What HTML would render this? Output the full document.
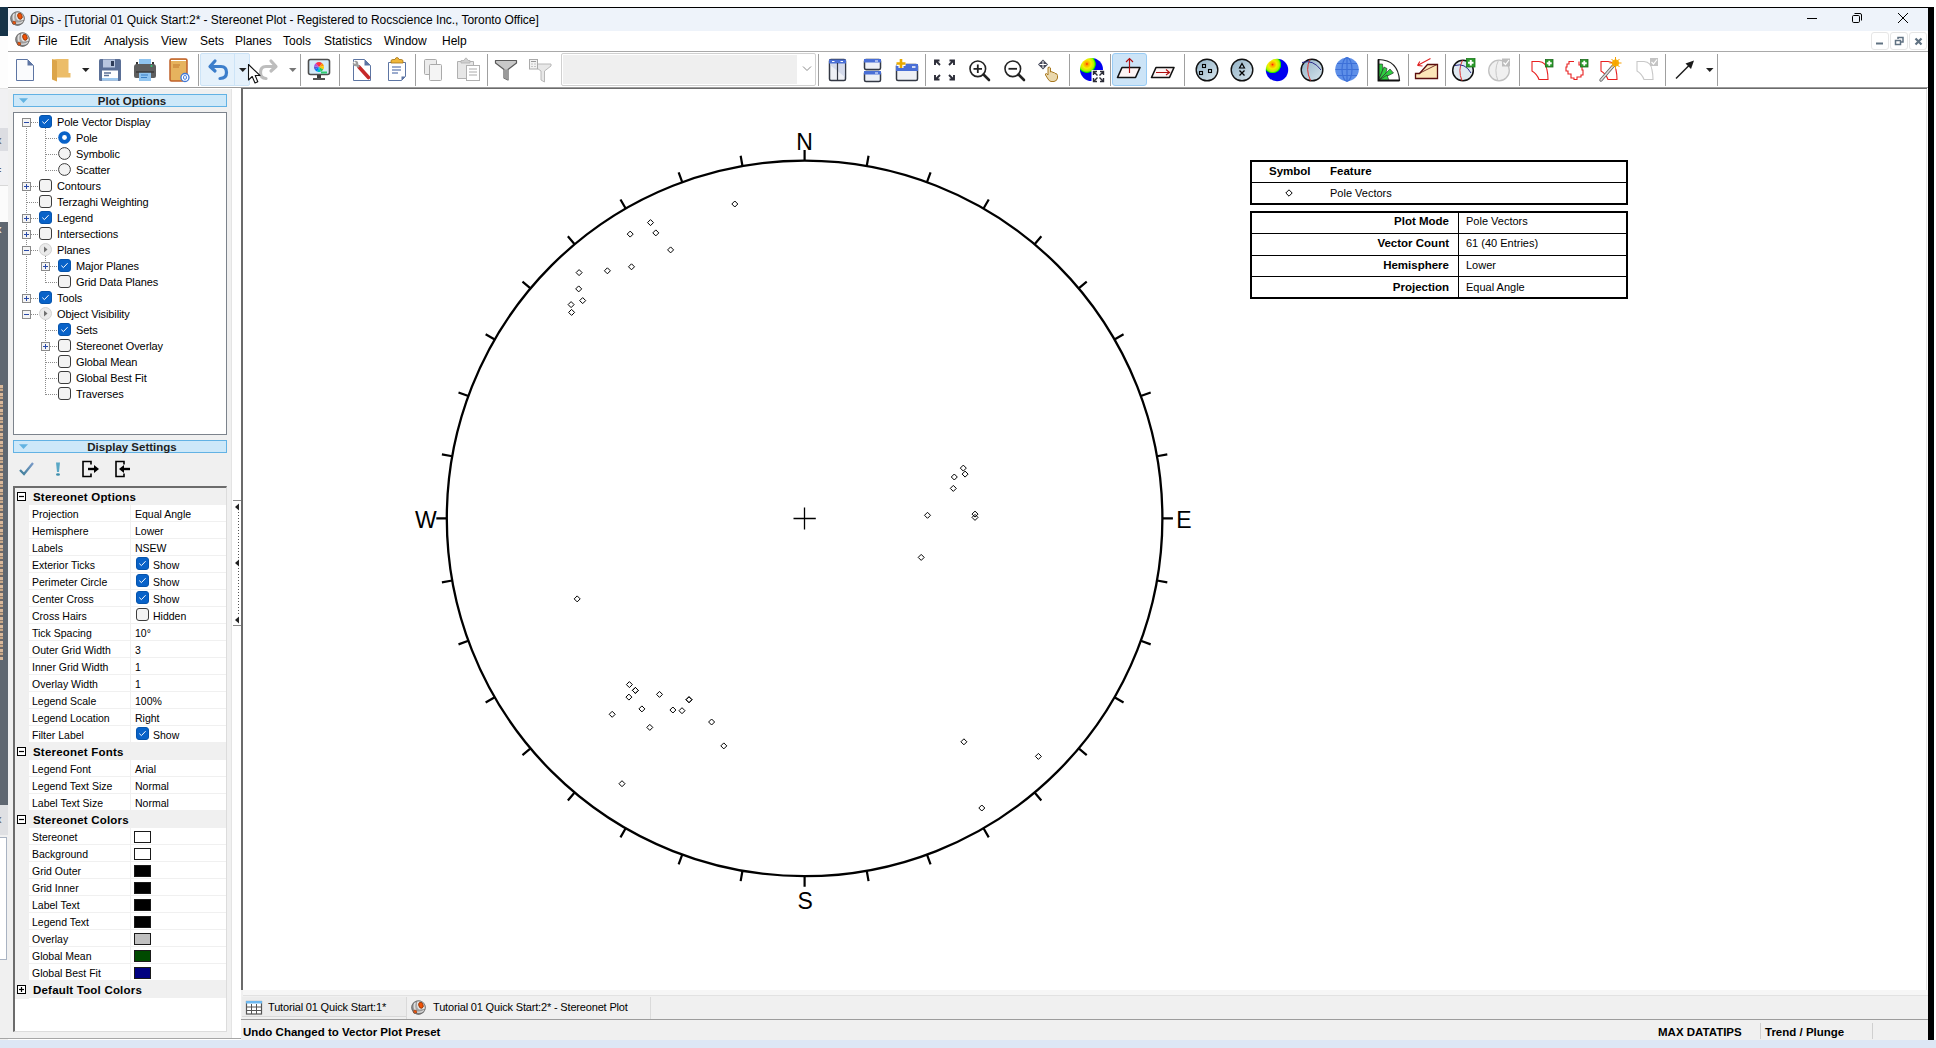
<!DOCTYPE html><html><head><meta charset="utf-8"><style>
*{margin:0;padding:0;box-sizing:border-box}
html,body{width:1936px;height:1048px;overflow:hidden;background:#fff;font-family:"Liberation Sans",sans-serif;position:relative}
.a{position:absolute}
.t{position:absolute;white-space:nowrap;font-size:12px;color:#000;line-height:14px}
.mn{top:34px;font-size:12px}
.lbl{font-size:23px;line-height:23px}
.sep{position:absolute;width:1px;top:54px;height:32px;background:#a0a0a0}
.ic{position:absolute;overflow:visible}
.tr{font-size:11px;letter-spacing:-0.1px}
.pg{font-size:10.5px}
.lg{font-size:11.5px}
</style></head><body>
<svg width="0" height="0" style="position:absolute"><defs>
<radialGradient id="lgG" cx="50%" cy="45%" r="60%"><stop offset="0" stop-color="#b8b8b8"/><stop offset=".7" stop-color="#8e8e8e"/><stop offset="1" stop-color="#5a5a5a"/></radialGradient>
<radialGradient id="ctG" cx="30%" cy="26%" r="62%"><stop offset="0" stop-color="#ff2000"/><stop offset=".1" stop-color="#ffa000"/><stop offset=".3" stop-color="#f4f000"/><stop offset=".5" stop-color="#b0f000"/><stop offset=".6" stop-color="#00e000"/><stop offset=".64" stop-color="#0000f0"/><stop offset="1" stop-color="#0000f0"/></radialGradient>
<linearGradient id="bgG" x1="0" y1="0" x2="1" y2="1"><stop offset="0" stop-color="#8fb0c4"/><stop offset="1" stop-color="#d8e6ee"/></linearGradient>
<symbol id="logo" viewBox="0 0 16 16">
<circle cx="8" cy="8" r="7.6" fill="url(#lgG)"/>
<path d="M6.6 1.2Q5.6 8.5 9 10.2L15 9.6Q15.4 3.5 11.5 1.2Z" fill="#e4e4e4"/>
<path d="M4.4 2.6Q2.6 7.5 5 11.3" stroke="#dedede" stroke-width="1.8" fill="none"/>
<path d="M5.2 12.6Q10 14 14.6 11" stroke="#d4d4d4" stroke-width="1.7" fill="none"/>
<ellipse cx="10.6" cy="5.6" rx="2.3" ry="3.3" transform="rotate(-18 10.6 5.6)" fill="#f25206" stroke="#8f3304" stroke-width=".9"/>
<circle cx="4.3" cy="12.6" r="1.8" fill="#f25206" stroke="#8f3304" stroke-width=".7"/>
<circle cx="8" cy="8" r="7.2" fill="none" stroke="#6e6e6e" stroke-width=".9"/>
</symbol>
</defs></svg>
<div class="a" style="left:0;top:7px;width:8px;height:29px;background:#163348"></div>
<div class="a" style="left:0;top:36px;width:8px;height:52px;background:#fdfdfd"></div>
<div class="a" style="left:0;top:88px;width:8px;height:40px;background:#f1f1f3;border-top:1px solid #e6e6e6"></div>
<div class="a" style="left:0;top:128px;width:8px;height:23px;background:#dcdde2"></div>
<div class="a" style="left:0;top:151px;width:8px;height:34px;background:#f1f1f3"></div>
<div class="a" style="left:0;top:185px;width:8px;height:37px;background:#fbfbfb;border-top:1px solid #d8d8d8"></div>
<div class="a" style="left:0;top:222px;width:8px;height:583px;background:#5f6771"></div>
<div class="a" style="left:0;top:385px;width:3px;height:275px;background:repeating-linear-gradient(180deg,#d9b89a 0 3px,#8a7a70 3px 4px,#c9a888 4px 6px,#6f6a6a 6px 8px)"></div>
<div class="t" style="left:-4px;top:222px;font-size:11px;color:#fff">x</div>
<div class="a" style="left:0;top:805px;width:8px;height:30px;background:#dfe0e3"></div>
<div class="t" style="left:-4px;top:812px;font-size:11px;color:#555">x</div>
<div class="t" style="left:-4px;top:133px;font-size:11px;color:#555">x</div>
<div class="t" style="left:-5px;top:163px;font-size:11px;color:#555">=</div>
<div class="a" style="left:0;top:835px;width:8px;height:205px;background:#f0f0f0"></div>
<div class="a" style="left:0;top:837px;width:7px;height:123px;background:#fff;border:1px solid #a9b3c2;border-left:none"></div>
<div class="a" style="left:8px;top:7px;width:1926px;height:1px;background:#000"></div>
<div class="a" style="left:1928px;top:7px;width:6px;height:1034px;background:#000"></div>
<div class="a" style="left:8px;top:8px;width:1920px;height:23px;background:#eef3fa"></div>
<div class="a" style="left:8px;top:31px;width:1920px;height:20px;background:#fff"></div>
<div class="a" style="left:8px;top:51px;width:1920px;height:1px;background:#a9a9a9"></div>
<div class="a" style="left:8px;top:52px;width:1920px;height:35px;background:#fff"></div>
<div class="a" style="left:8px;top:87px;width:1920px;height:1px;background:#9c9c9c"></div>
<div class="a" style="left:8px;top:89px;width:224px;height:949px;background:#f0f0f0;border-right:1px solid #e4e4e4"></div>
<div class="a" style="left:232px;top:88px;width:9px;height:950px;background:#fff"></div>
<div class="a" style="left:241px;top:88px;width:1686px;height:902px;background:#fff;border-left:2px solid #6b6b6b;border-top:1px solid #6b6b6b"></div>
<div class="a" style="left:1926px;top:89px;width:1px;height:901px;background:#e2e2e2"></div>
<div class="a" style="left:241px;top:990px;width:1687px;height:50px;background:#f0f0f0"></div>
<div class="a" style="left:241px;top:1019px;width:1687px;height:1px;background:#a0a0a0"></div>
<div class="a" style="left:0;top:1040px;width:1936px;height:8px;background:#dde7f5"></div>
<svg class="ic" style="left:10px;top:11px" width="15" height="15"><use href="#logo"/></svg>
<svg class="ic" style="left:15px;top:32px" width="15" height="15"><use href="#logo"/></svg>
<div class="t" style="left:30px;top:13px;letter-spacing:-0.04px">Dips - [Tutorial 01 Quick Start:2* - Stereonet Plot - Registered to Rocscience Inc., Toronto Office]</div>
<div class="t mn" style="left:38px">File</div>
<div class="t mn" style="left:70px">Edit</div>
<div class="t mn" style="left:104px">Analysis</div>
<div class="t mn" style="left:161px">View</div>
<div class="t mn" style="left:200px">Sets</div>
<div class="t mn" style="left:235px">Planes</div>
<div class="t mn" style="left:283px">Tools</div>
<div class="t mn" style="left:324px">Statistics</div>
<div class="t mn" style="left:384px">Window</div>
<div class="t mn" style="left:442px">Help</div>
<svg class="ic" style="left:1800px;top:8px" width="120" height="22">
<path d="M7 10.5H17" stroke="#000" stroke-width="1"/>
<rect x="52.5" y="7.5" width="7" height="7" rx="1.2" fill="none" stroke="#000"/>
<path d="M54.5 5.5H60a1.5 1.5 0 0 1 1.5 1.5V12.5" fill="none" stroke="#000"/>
<path d="M98 5L108 15M108 5L98 15" stroke="#000" stroke-width="1"/>
</svg>
<div class="a" style="left:1871px;top:32px;width:18px;height:18px;border:1px solid #e6e6e6;border-radius:3px"></div>
<div class="a" style="left:1890px;top:32px;width:18px;height:18px;border:1px solid #e6e6e6;border-radius:3px"></div>
<div class="a" style="left:1909px;top:32px;width:18px;height:18px;border:1px solid #e6e6e6;border-radius:3px"></div>
<svg class="ic" style="left:1870px;top:31px" width="60" height="20">
<path d="M6 12.5H13" stroke="#607282" stroke-width="2"/>
<rect x="25.5" y="9.5" width="5" height="4" fill="none" stroke="#607282" stroke-width="1.5"/>
<path d="M28 8V6.5H33V11H31" fill="none" stroke="#607282" stroke-width="1.5"/>
<path d="M45.5 7.5L51.5 13.5M51.5 7.5L45.5 13.5" stroke="#607282" stroke-width="2.2"/>
</svg>
<div class="sep" style="left:198px"></div>
<div class="sep" style="left:300px"></div>
<div class="sep" style="left:339px"></div>
<div class="sep" style="left:415px"></div>
<div class="sep" style="left:487px"></div>
<div class="sep" style="left:818px"></div>
<div class="sep" style="left:925px"></div>
<div class="sep" style="left:1069px"></div>
<div class="sep" style="left:1110px"></div>
<div class="sep" style="left:1184px"></div>
<div class="sep" style="left:1367px"></div>
<div class="sep" style="left:1408px"></div>
<div class="sep" style="left:1445px"></div>
<div class="sep" style="left:1519px"></div>
<div class="sep" style="left:1665px"></div>
<div class="sep" style="left:1717px"></div>
<div class="a" style="left:200px;top:53px;width:50px;height:33px;background:#e5f1fb;border:1px solid #cde4f7;border-radius:2px"></div>
<div class="a" style="left:234px;top:53px;width:1px;height:33px;background:#cde4f7"></div>
<div class="a" style="left:1112px;top:53px;width:35px;height:33px;background:#cce4f7;border:1px solid #99ccf5;border-radius:3px"></div>
<div class="a" style="left:561px;top:53px;width:255px;height:33px;background:#fff;border:1px solid #d0d0d0;border-radius:2px"></div>
<div class="a" style="left:563px;top:55px;width:234px;height:29px;background:#efefef"></div>
<svg class="ic" style="left:800px;top:64px" width="14" height="10" viewBox="0 0 14 10"><path d="M3 2.5L7 6.5L11 2.5" stroke="#8a8a8a" fill="none" stroke-width="1"/></svg>
<svg class="ic" style="left:82px;top:67px" width="8" height="6" viewBox="0 0 8 6"><path d="M0 1H7.5L3.75 5Z" fill="#222"/></svg>
<svg class="ic" style="left:239px;top:67px" width="8" height="6" viewBox="0 0 8 6"><path d="M0 1H7.5L3.75 5Z" fill="#222"/></svg>
<svg class="ic" style="left:289px;top:67px" width="8" height="6" viewBox="0 0 8 6"><path d="M0 1H7.5L3.75 5Z" fill="#777"/></svg>
<svg class="ic" style="left:1706px;top:67px" width="8" height="6" viewBox="0 0 8 6"><path d="M0 1H7.5L3.75 5Z" fill="#222"/></svg>
<svg class="ic" style="left:14px;top:58px" width="22" height="24" viewBox="0 0 22 24"><path d="M2.5 1.5H13.5L19.5 7.5V22.5H2.5Z" fill="#fafbfd" stroke="#5d75a3" stroke-width="1"/><path d="M13.5 1.5V7.5H19.5Z" fill="#5d75a3"/></svg>
<svg class="ic" style="left:50px;top:58px" width="22" height="24" viewBox="0 0 22 24"><path d="M5.5 1H18.5V15H20.5V19.5H5.5Z" fill="#ecbd69"/><path d="M2 1L7 2.5V23.5L2 21.5Z" fill="#dca54a"/><path d="M2 1H6L7 2.5Z" fill="#f0c878"/></svg>
<svg class="ic" style="left:98px;top:58px" width="24" height="24" viewBox="0 0 24 24"><rect x="1" y="1" width="22" height="22" rx="1.5" fill="#5a6f96"/><rect x="5" y="1.5" width="12" height="8" fill="#b8c6de"/><rect x="13" y="3" width="3" height="5" fill="#2e3c58"/><rect x="4" y="12.5" width="16" height="10" fill="#fff"/><path d="M6 15H13M6 17.5H11" stroke="#5a6f96" stroke-width="1.3"/><rect x="4" y="20" width="16" height="2.5" fill="#9cc8f0"/></svg>
<svg class="ic" style="left:133px;top:58px" width="24" height="24" viewBox="0 0 24 24"><rect x="6" y="1" width="12" height="6" fill="#8fc4f0"/><rect x="3" y="4" width="2" height="3" fill="#333"/><rect x="19" y="4" width="2" height="3" fill="#333"/><path d="M1 9Q1 6 4 6H20Q23 6 23 9V18Q23 20 21 20H3Q1 20 1 18Z" fill="#5e5e5e"/><circle cx="18.5" cy="8" r="1" fill="#2ecc71"/><rect x="6" y="14" width="12" height="9" fill="#8fc4f0"/><path d="M8 17H15M8 19.5H14" stroke="#3b7fc4" stroke-width="1"/><path d="M3 14H21" stroke="#3a3a3a" stroke-width="1.5"/></svg>
<svg class="ic" style="left:169px;top:58px" width="24" height="26" viewBox="0 0 24 26"><rect x="1" y="1" width="17" height="22" rx="1.5" fill="#e6b35e" stroke="#c0612a" stroke-width="1.5"/><path d="M2 2.5H17" stroke="#fff" stroke-width="1"/><path d="M4 7H11M4 9H10" stroke="#c0782f" stroke-width="1"/><circle cx="16" cy="19.5" r="4" fill="#fff" stroke="#3f78d8" stroke-width="1.3"/><rect x="14.6" y="17.5" width="2.8" height="3.8" rx="1.2" fill="none" stroke="#3f78d8" stroke-width="1"/></svg>
<svg class="ic" style="left:207px;top:58px" width="24" height="24" viewBox="0 0 24 24"><path d="M8 3L3 8.5L8 13" fill="none" stroke="#3c7ecb" stroke-width="3.2" stroke-linejoin="round" stroke-linecap="round"/><path d="M4 8.5H14Q19.5 8.5 19.5 14.5Q19.5 20.5 13 20.5" fill="none" stroke="#3c7ecb" stroke-width="3.2" stroke-linecap="round"/></svg>
<svg class="ic" style="left:255.5px;top:58px" width="24" height="24" viewBox="0 0 24 24"><path d="M15 3L20 8.5L15 13" fill="none" stroke="#bdbdbd" stroke-width="3.2" stroke-linejoin="round" stroke-linecap="round"/><path d="M19 8.5H10Q4.5 8.5 4.5 14.5Q4.5 20.5 10 20.5" fill="none" stroke="#bdbdbd" stroke-width="3.2" stroke-linecap="round"/></svg>
<svg class="ic" style="left:247px;top:63px" width="16" height="22" viewBox="0 0 16 22"><path d="M1.5 1.5V17L5.2 13.5L8 20L10.8 18.8L8.2 12.5H13Z" fill="#fff" stroke="#111" stroke-width="1.1" stroke-linejoin="round"/></svg>
<svg class="ic" style="left:307px;top:58px" width="24" height="24" viewBox="0 0 24 24"><rect x="1.5" y="1.5" width="21" height="15" rx="2" fill="#d6ecf9" stroke="#4d4d4d" stroke-width="1.6"/><path d="M12 9L12.00 4.00A5 5 0 0 1 15.21 5.17Z" fill="#ff3b30"/><path d="M12 9L15.21 5.17A5 5 0 0 1 16.92 8.13Z" fill="#ff9500"/><path d="M12 9L16.92 8.13A5 5 0 0 1 16.33 11.50Z" fill="#ffcc00"/><path d="M12 9L16.33 11.50A5 5 0 0 1 13.71 13.70Z" fill="#34c759"/><path d="M12 9L13.71 13.70A5 5 0 0 1 10.29 13.70Z" fill="#00c7be"/><path d="M12 9L10.29 13.70A5 5 0 0 1 7.67 11.50Z" fill="#007aff"/><path d="M12 9L7.67 11.50A5 5 0 0 1 7.08 8.13Z" fill="#5856d6"/><path d="M12 9L7.08 8.13A5 5 0 0 1 8.79 5.17Z" fill="#af52de"/><path d="M12 9L8.79 5.17A5 5 0 0 1 12.00 4.00Z" fill="#ff2d55"/><rect x="14" y="13.5" width="6" height="2" fill="#2ecc71"/><rect x="10" y="17" width="4" height="3" fill="#3a3a3a"/><rect x="6" y="20" width="12" height="2" fill="#555"/></svg>
<svg class="ic" style="left:352px;top:58px" width="22" height="24" viewBox="0 0 22 24"><path d="M1.5 1.5H12.5L18.5 7.5V22.5H1.5Z" fill="#fff" stroke="#5d75a3"/><path d="M12.5 1.5V7.5H18.5Z" fill="#5d75a3"/><path d="M7 9L16.5 19.5" stroke="#c62828" stroke-width="3.6" stroke-linecap="round"/><path d="M3.5 5.5L7 9" stroke="#9a9a9a" stroke-width="2.6"/><circle cx="3.5" cy="5.5" r="2.7" fill="#9e9e9e"/><path d="M1.8 3.8L3.5 5.5" stroke="#fff" stroke-width="1.6"/></svg>
<svg class="ic" style="left:386px;top:57px" width="22" height="25" viewBox="0 0 22 25"><path d="M2.5 5.5H19.5V19.5L15.5 23.5H2.5Z" fill="#fff" stroke="#5d75a3"/><path d="M19.5 19.5H15.5V23.5Z" fill="#5d75a3"/><path d="M5 4Q5 2.5 7 2.5H9Q9.5 0.5 11 0.5Q12.5 0.5 13 2.5H15Q17 2.5 17 4V6H5Z" fill="#f0b73a" stroke="#a47414" stroke-width=".8"/><path d="M6 10H15M6 13H15M6 16H12" stroke="#3b5a9e" stroke-width="1.1"/></svg>
<svg class="ic" style="left:423px;top:58px" width="22" height="24" viewBox="0 0 22 24"><rect x="1.5" y="1.5" width="12" height="15" rx="1" fill="#ececec" stroke="#aaa"/><rect x="6.5" y="6.5" width="12" height="16" rx="1" fill="#f4f4f4" stroke="#aaa"/></svg>
<svg class="ic" style="left:456px;top:57px" width="26" height="25" viewBox="0 0 26 25"><path d="M1.5 4.5H17.5V21.5H1.5Z" fill="#e6e6e6" stroke="#b0b0b0"/><path d="M5 6V3.5H8Q9 1 10 1Q11 1 12 3.5H14V6Z" fill="#d0d0d0" stroke="#b0b0b0" stroke-width=".8"/><rect x="10.5" y="8.5" width="13" height="15" fill="#fff" stroke="#b0b0b0"/><path d="M13 12H21M13 15H21M13 18H21" stroke="#aaa" stroke-width="1"/></svg>
<svg class="ic" style="left:494px;top:58px" width="24" height="24" viewBox="0 0 24 24"><path d="M1.5 2.5H22.5V5L14 11.5V22L10 20V11.5L1.5 5Z" fill="#c8c8c8" stroke="#5a5a5a" stroke-width="1.2" stroke-linejoin="round"/><path d="M10 11.5H14V22L10 20Z" fill="#9a9a9a"/></svg>
<svg class="ic" style="left:528px;top:58px" width="26" height="26" viewBox="0 0 26 26"><path d="M6 6H23V8L16.5 13V24L13 22V13L6 8Z" fill="#e8e8e8" stroke="#b8b8b8"/><rect x="1.5" y="1.5" width="8" height="9.5" fill="#f2f2f2" stroke="#aaa"/><path d="M3 3.5H8M3.5 6H4.5M6.5 6H7.5M3.5 8.5H4.5M6.5 8.5H7.5" stroke="#999" stroke-width="1"/></svg>
<svg class="ic" style="left:828px;top:58px" width="20" height="24" viewBox="0 0 20 24"><rect x="1.5" y="1.5" width="16" height="21" rx="1.5" fill="#eef0f6" stroke="#333844" stroke-width="1.5"/><path d="M2 7L17 19V2H2Z" fill="#cdd5e8" opacity=".8"/><path d="M1 1.5H18V5.5H1Z" fill="#4a6fd6"/><path d="M9.5 5V23" stroke="#333844" stroke-width="1.2"/><path d="M4 3.5H6.5M12.5 3.5H15" stroke="#fff" stroke-width="1"/></svg>
<svg class="ic" style="left:863px;top:58px" width="20" height="25" viewBox="0 0 20 25"><rect x="1.5" y="1.5" width="16" height="10" rx="1.5" fill="#eef0f6" stroke="#333844" stroke-width="1.5"/><path d="M1 1H18V4.5H1Z" fill="#4a6fd6"/><rect x="1.5" y="13.5" width="16" height="10" rx="1.5" fill="#eef0f6" stroke="#333844" stroke-width="1.5"/><path d="M1 13H18V16.5H1Z" fill="#4a6fd6"/><path d="M12 3H15M12 15H15" stroke="#fff" stroke-width="1"/></svg>
<svg class="ic" style="left:895px;top:58px" width="25" height="24" viewBox="0 0 25 24"><rect x="1.5" y="6.5" width="21" height="16" rx="1.5" fill="#eef0f6" stroke="#333844" stroke-width="1.5"/><path d="M1 6H23V13H1Z" fill="#4a6fd6"/><path d="M17 9H20.5" stroke="#fff" stroke-width="1.5"/><path d="M6 1V10M1.5 5.5H10.5" stroke="#fff" stroke-width="5"/><path d="M6 1V10M1.5 5.5H10.5" stroke="#e8aa00" stroke-width="2.6"/></svg>
<svg class="ic" style="left:933px;top:58px" width="23" height="24" viewBox="0 0 23 24"><g stroke="#2c2d38" stroke-width="1.9" fill="none"><path d="M2 7V2.5H6.5M2.5 2.5L7 7"/><path d="M21 7V2.5H16.5M20.5 2.5L16 7"/><path d="M2 17V21.5H6.5M2.5 21.5L7 17"/><path d="M21 17V21.5H16.5M20.5 21.5L16 17"/></g></svg>
<svg class="ic" style="left:968px;top:58px" width="24" height="24" viewBox="0 0 24 24"><circle cx="9.8" cy="10.8" r="7.8" fill="none" stroke="#222" stroke-width="1.6"/><path d="M15.5 16.5L21 22" stroke="#222" stroke-width="2.6" stroke-linecap="round"/><path d="M5.5 10.8H14M9.8 6.5V15" stroke="#222" stroke-width="1.8"/></svg>
<svg class="ic" style="left:1003px;top:58px" width="24" height="24" viewBox="0 0 24 24"><circle cx="9.8" cy="10.8" r="7.8" fill="none" stroke="#222" stroke-width="1.6"/><path d="M15.5 16.5L21 22" stroke="#222" stroke-width="2.6" stroke-linecap="round"/><path d="M5.5 10.8H14" stroke="#222" stroke-width="1.8"/></svg>
<svg class="ic" style="left:1037px;top:58px" width="24" height="24" viewBox="0 0 24 24"><path d="M6 1.5L11 6.5L6 11.5L1 6.5Z" fill="#45485a"/><path d="M6 3V10M2.5 6.5H9.5" stroke="#fff" stroke-width="1"/><path d="M11 9.5Q12.5 8.5 13.5 10V14Q15 13 16 14.5Q17.5 14 18 15.5Q20 15 20.5 17.5V20Q20 23 17 23.5H14Q12 23 11 21L8.5 17Q8 15.5 9.5 15.5L11 17Z" fill="#ead8ad" stroke="#a8781f" stroke-width="1"/></svg>
<svg class="ic" style="left:1079px;top:57px" width="26" height="26" viewBox="0 0 26 26"><circle cx="12.5" cy="12.5" r="11.5" fill="url(#ctG)"/><rect x="12.5" y="13" width="13" height="13" fill="#fff"/><g stroke="#2c2d38" stroke-width="1.4" fill="none"><path d="M14.5 18V14.5H18M14.8 14.8L18.5 18.5"/><path d="M24.5 18V14.5H21M24.2 14.8L20.5 18.5"/><path d="M14.5 21V24.5H18M14.8 24.2L18.5 20.5"/><path d="M24.5 21V24.5H21M24.2 24.2L20.5 20.5"/></g></svg>
<svg class="ic" style="left:1116px;top:56px" width="26" height="26" viewBox="0 0 26 26"><path d="M6 11.5H24L19.5 21.5H1.5Z" fill="#fdf5f5" stroke="#111" stroke-width="1.6" stroke-linejoin="round"/><path d="M13.5 17V2.5M10 6L13.5 2.5L17 6" fill="none" stroke="#b01010" stroke-width="1.15"/></svg>
<svg class="ic" style="left:1150px;top:56px" width="26" height="26" viewBox="0 0 26 26"><path d="M6 11.5H24L19.5 21.5H1.5Z" fill="#fdf5f5" stroke="#111" stroke-width="1.6" stroke-linejoin="round"/><path d="M6 16.5H19.5M16 13.5L19.5 16.5L16 19" fill="none" stroke="#b01010" stroke-width="1.15"/></svg>
<svg class="ic" style="left:1194px;top:57px" width="26" height="26" viewBox="0 0 26 26"><circle cx="13" cy="13" r="10.8" fill="url(#bgG)" stroke="#111" stroke-width="1.4"/><rect x="8.5" y="7.5" width="3" height="3" fill="none" stroke="#000" stroke-width="1.1"/><rect x="5.5" y="14.5" width="3" height="3" fill="none" stroke="#000" stroke-width="1.1"/><rect x="14.5" y="12.5" width="3" height="3" fill="none" stroke="#000" stroke-width="1.1"/></svg>
<svg class="ic" style="left:1229px;top:57px" width="26" height="26" viewBox="0 0 26 26"><circle cx="13" cy="13" r="10.8" fill="url(#bgG)" stroke="#111" stroke-width="1.4"/><path d="M13 6.5L15.5 11H10.5Z" fill="none" stroke="#000" stroke-width="1.2"/><path d="M10.5 13.5L15.5 18.5M15.5 13.5L10.5 18.5" stroke="#000" stroke-width="1.3"/></svg>
<svg class="ic" style="left:1264px;top:57px" width="26" height="26" viewBox="0 0 26 26"><circle cx="13" cy="13" r="11.2" fill="url(#ctG)"/></svg>
<svg class="ic" style="left:1299px;top:57px" width="26" height="26" viewBox="0 0 26 26"><circle cx="13" cy="13" r="10.8" fill="url(#bgG)" stroke="#111" stroke-width="1.4"/><path d="M11 2.5Q6 12 11.5 23.5" stroke="#e03030" stroke-width="1" fill="none"/><path d="M3 5.5Q14 2 22 13" stroke="#2a2a8a" stroke-width="1" fill="none"/></svg>
<svg class="ic" style="left:1334px;top:56px" width="26" height="27" viewBox="0 0 26 27"><circle cx="13" cy="13.5" r="11.8" fill="#5e8fe8"/><g stroke="#3d70d8" stroke-width="1.2" fill="none"><ellipse cx="13" cy="13.5" rx="5" ry="11.8"/><path d="M13 1.7V25.3M1.5 13.5H24.5M3 7.5H23M3 19.5H23"/></g></svg>
<svg class="ic" style="left:1377px;top:58px" width="24" height="24" viewBox="0 0 24 24"><path d="M1.5 1.5Q21 2 22.5 22.5H1.5Z" fill="#fff" stroke="#222" stroke-width="1.2"/><path d="M1.5 22.5V6H5.5L6 12L4.5 15Z" fill="#2ecc40" stroke="#222" stroke-width=".6"/><path d="M1.5 22.5L7 9L10 10.5L9 15Z" fill="#2ecc40" stroke="#222" stroke-width=".6"/><path d="M1.5 22.5L13 11L16.5 15Z" fill="#2ecc40" stroke="#222" stroke-width=".6"/><path d="M1.5 22.5L10 17L12 22.5Z" fill="#2ecc40" stroke="#222" stroke-width=".6"/><path d="M1.5 1.5V22.5H22.5" fill="none" stroke="#111" stroke-width="1.8"/></svg>
<svg class="ic" style="left:1414px;top:57px" width="26" height="26" viewBox="0 0 26 26"><path d="M1.5 16.5H5.5L13.5 7.5H23.5V21.5H1.5Z" fill="#fce6b8" stroke="#5a0e0e" stroke-width="1.3"/><path d="M5 16.5L23 7.5" stroke="#5a0e0e" stroke-width=".8"/><path d="M16.5 1.5L3.5 8.5M3.5 8.5L8.5 9M3.5 8.5L5.8 4.5" stroke="#e02020" stroke-width="1.1" fill="none"/></svg>
<svg class="ic" style="left:1451px;top:57px" width="26" height="26" viewBox="0 0 26 26"><circle cx="12" cy="13.5" r="10.3" fill="#dfe9f1" stroke="#111" stroke-width="1.5"/><path d="M11.5 3.3Q6.5 13 11 23.8" stroke="#e03030" stroke-width="1" fill="none"/><path d="M4 8.5Q14 5.5 20 16" stroke="#2a2a8a" stroke-width="1" fill="none"/><rect x="15.5" y="1.5" width="8.5" height="8.5" fill="#2b9a2b" stroke="#1d7a1d" stroke-width=".8"/><path d="M19.75 3V8.5M17 5.75H22.5" stroke="#fff" stroke-width="2"/></svg>
<svg class="ic" style="left:1487px;top:57px" width="26" height="26" viewBox="0 0 26 26"><circle cx="12" cy="13.5" r="10.3" fill="#f0f0f0" stroke="#c0c0c0" stroke-width="1.3"/><path d="M11.5 3.3Q6.5 13 11 23.8" stroke="#c8c8c8" stroke-width="1" fill="none"/><rect x="15" y="1.5" width="8" height="8" fill="#bdbdbd"/><path d="M16.5 5.5L18.5 7.5L22 3" stroke="#fff" stroke-width="1.2" fill="none"/></svg>
<svg class="ic" style="left:1530px;top:57px" width="26" height="26" viewBox="0 0 26 26"><path d="M2 4.5H9Q16 5 17 13Q18 17 18 22.5H9Q7 17 2 14Z" fill="none" stroke="#e82020" stroke-width="1.1"/><rect x="15.5" y="2.5" width="7.5" height="7.5" fill="#2b9a2b" stroke="#1d6a1d" stroke-width=".8"/><path d="M19.25 3.8V8.7M16.8 6.25H21.7" stroke="#fff" stroke-width="1.8"/></svg>
<svg class="ic" style="left:1565px;top:57px" width="26" height="26" viewBox="0 0 26 26"><path d="M9 4.5H4V7H2V10H1V14H3V17H6V21H9V22.5H12V20H16V18H18V13H17V8H14V4.5" fill="none" stroke="#e82020" stroke-width="1.1"/><rect x="15.5" y="2.5" width="7.5" height="7.5" fill="#2b9a2b" stroke="#1d6a1d" stroke-width=".8"/><path d="M19.25 3.8V8.7M16.8 6.25H21.7" stroke="#fff" stroke-width="1.8"/></svg>
<svg class="ic" style="left:1599px;top:57px" width="26" height="26" viewBox="0 0 26 26"><path d="M2 4.5H9Q16 5 17 13Q18 17 18 22.5H9Q7 17 2 14Z" fill="none" stroke="#e82020" stroke-width="1.1"/><path d="M2 23L15 8" stroke="#666" stroke-width="3.4" stroke-linecap="round"/><path d="M2 23L15 8" stroke="#ddd" stroke-width="1.6" stroke-linecap="round"/><circle cx="16.5" cy="6" r="3.5" fill="#f7b500"/><path d="M16.5 0V12M10.5 6H22.5M12.5 2L20.5 10M20.5 2L12.5 10" stroke="#f7a000" stroke-width="1"/></svg>
<svg class="ic" style="left:1635px;top:57px" width="26" height="26" viewBox="0 0 26 26"><path d="M2 4.5H9Q16 5 17 13Q18 17 18 22.5H9Q7 17 2 14Z" fill="none" stroke="#c8c8c8" stroke-width="1.1"/><rect x="15" y="1" width="8" height="8" fill="#c4c4c4"/><path d="M16.5 5L18.5 7L22 2.5" stroke="#fff" stroke-width="1.2" fill="none"/></svg>
<svg class="ic" style="left:1673px;top:58px" width="24" height="24" viewBox="0 0 24 24"><path d="M3 20.5L19 4.5" stroke="#1a1a1a" stroke-width="1.5"/><path d="M21 2.5L12.5 5.5L18 11Z" fill="#1a1a1a"/></svg>
<div class="a" style="left:13px;top:94px;width:214px;height:13px;background:#cde8f9;border:1px solid #62b2e4"></div>
<svg class="ic" style="left:18px;top:96px" width="12" height="9" viewBox="0 0 12 9"><path d="M1 2.3H10L5.5 7Z" fill="#62b3e2"/></svg>
<div class="t" style="left:32px;top:94px;width:200px;text-align:center;font-weight:bold;font-size:11.5px;color:#1e1e1e">Plot Options</div>
<div class="a" style="left:13px;top:112px;width:214px;height:323px;background:#fff;border:1px solid #7c838c"></div>
<svg class="ic" style="left:0px;top:0px" width="240" height="440" viewBox="0 0 240 440"><path d="M31 122.5H38M46 138.5H57M46 154.5H57M46 170.5H57M31 186.5H38M27 202.5H38M31 218.5H38M31 234.5H38M31 250.5H38M50 266.5H57M46 282.5H57M31 298.5H38M31 314.5H38M46 330.5H57M50 346.5H57M46 362.5H57M46 378.5H57M46 394.5H57M26.5 128V299M45.5 128V171M45.5 256V283M45.5 320V395" stroke="#8c8c8c" stroke-width="1" stroke-dasharray="1 1" fill="none"/></svg>
<svg class="ic" style="left:22px;top:118px" width="9" height="9" viewBox="0 0 9 9"><rect x=".5" y=".5" width="8" height="8" fill="#f4f4f4" stroke="#8a8a8a"/><path d="M2 4.5H7" stroke="#2a4aa8" stroke-width="1"/></svg>
<svg class="ic" style="left:39px;top:115px" width="13" height="13" viewBox="0 0 13 13"><rect x=".5" y=".5" width="12" height="12" rx="2.5" fill="#0862c8" stroke="#0654ac"/><path d="M3.3 6.6L5.4 8.6L9.6 4.2" stroke="#fff" stroke-width="1" fill="none"/></svg>
<div class="t tr" style="left:57px;top:115.0px">Pole Vector Display</div>
<svg class="ic" style="left:58px;top:131px" width="13" height="13" viewBox="0 0 13 13"><circle cx="6.5" cy="6.5" r="6.3" fill="#0862c8"/><circle cx="6.5" cy="6.5" r="2.4" fill="#fff"/></svg>
<div class="t tr" style="left:76px;top:131.0px">Pole</div>
<svg class="ic" style="left:58px;top:147px" width="13" height="13" viewBox="0 0 13 13"><circle cx="6.5" cy="6.5" r="5.9" fill="#f3f3f3" stroke="#3c3c3c" stroke-width="1"/></svg>
<div class="t tr" style="left:76px;top:147.0px">Symbolic</div>
<svg class="ic" style="left:58px;top:163px" width="13" height="13" viewBox="0 0 13 13"><circle cx="6.5" cy="6.5" r="5.9" fill="#f3f3f3" stroke="#3c3c3c" stroke-width="1"/></svg>
<div class="t tr" style="left:76px;top:163.0px">Scatter</div>
<svg class="ic" style="left:22px;top:182px" width="9" height="9" viewBox="0 0 9 9"><rect x=".5" y=".5" width="8" height="8" fill="#f4f4f4" stroke="#8a8a8a"/><path d="M2 4.5H7" stroke="#2a4aa8" stroke-width="1"/><path d="M4.5 2V7" stroke="#2a4aa8" stroke-width="1"/></svg>
<svg class="ic" style="left:39px;top:179px" width="13" height="13" viewBox="0 0 13 13"><rect x=".5" y=".5" width="12" height="12" rx="2.5" fill="#f3f3f3" stroke="#3c3c3c"/></svg>
<div class="t tr" style="left:57px;top:179.0px">Contours</div>
<svg class="ic" style="left:39px;top:195px" width="13" height="13" viewBox="0 0 13 13"><rect x=".5" y=".5" width="12" height="12" rx="2.5" fill="#f3f3f3" stroke="#3c3c3c"/></svg>
<div class="t tr" style="left:57px;top:195.0px">Terzaghi Weighting</div>
<svg class="ic" style="left:22px;top:214px" width="9" height="9" viewBox="0 0 9 9"><rect x=".5" y=".5" width="8" height="8" fill="#f4f4f4" stroke="#8a8a8a"/><path d="M2 4.5H7" stroke="#2a4aa8" stroke-width="1"/><path d="M4.5 2V7" stroke="#2a4aa8" stroke-width="1"/></svg>
<svg class="ic" style="left:39px;top:211px" width="13" height="13" viewBox="0 0 13 13"><rect x=".5" y=".5" width="12" height="12" rx="2.5" fill="#0862c8" stroke="#0654ac"/><path d="M3.3 6.6L5.4 8.6L9.6 4.2" stroke="#fff" stroke-width="1" fill="none"/></svg>
<div class="t tr" style="left:57px;top:211.0px">Legend</div>
<svg class="ic" style="left:22px;top:230px" width="9" height="9" viewBox="0 0 9 9"><rect x=".5" y=".5" width="8" height="8" fill="#f4f4f4" stroke="#8a8a8a"/><path d="M2 4.5H7" stroke="#2a4aa8" stroke-width="1"/><path d="M4.5 2V7" stroke="#2a4aa8" stroke-width="1"/></svg>
<svg class="ic" style="left:39px;top:227px" width="13" height="13" viewBox="0 0 13 13"><rect x=".5" y=".5" width="12" height="12" rx="2.5" fill="#f3f3f3" stroke="#3c3c3c"/></svg>
<div class="t tr" style="left:57px;top:227.0px">Intersections</div>
<svg class="ic" style="left:22px;top:246px" width="9" height="9" viewBox="0 0 9 9"><rect x=".5" y=".5" width="8" height="8" fill="#f4f4f4" stroke="#8a8a8a"/><path d="M2 4.5H7" stroke="#2a4aa8" stroke-width="1"/></svg>
<svg class="ic" style="left:39px;top:243px" width="13" height="13" viewBox="0 0 13 13"><circle cx="6.5" cy="6.5" r="6" fill="#eaeaea" stroke="#d2d2d2"/><path d="M5 3.5L8.5 6.5L5 9.5Z" fill="#707070"/></svg>
<div class="t tr" style="left:57px;top:243.0px">Planes</div>
<svg class="ic" style="left:41px;top:262px" width="9" height="9" viewBox="0 0 9 9"><rect x=".5" y=".5" width="8" height="8" fill="#f4f4f4" stroke="#8a8a8a"/><path d="M2 4.5H7" stroke="#2a4aa8" stroke-width="1"/><path d="M4.5 2V7" stroke="#2a4aa8" stroke-width="1"/></svg>
<svg class="ic" style="left:58px;top:259px" width="13" height="13" viewBox="0 0 13 13"><rect x=".5" y=".5" width="12" height="12" rx="2.5" fill="#0862c8" stroke="#0654ac"/><path d="M3.3 6.6L5.4 8.6L9.6 4.2" stroke="#fff" stroke-width="1" fill="none"/></svg>
<div class="t tr" style="left:76px;top:259.0px">Major Planes</div>
<svg class="ic" style="left:58px;top:275px" width="13" height="13" viewBox="0 0 13 13"><rect x=".5" y=".5" width="12" height="12" rx="2.5" fill="#f3f3f3" stroke="#3c3c3c"/></svg>
<div class="t tr" style="left:76px;top:275.0px">Grid Data Planes</div>
<svg class="ic" style="left:22px;top:294px" width="9" height="9" viewBox="0 0 9 9"><rect x=".5" y=".5" width="8" height="8" fill="#f4f4f4" stroke="#8a8a8a"/><path d="M2 4.5H7" stroke="#2a4aa8" stroke-width="1"/><path d="M4.5 2V7" stroke="#2a4aa8" stroke-width="1"/></svg>
<svg class="ic" style="left:39px;top:291px" width="13" height="13" viewBox="0 0 13 13"><rect x=".5" y=".5" width="12" height="12" rx="2.5" fill="#0862c8" stroke="#0654ac"/><path d="M3.3 6.6L5.4 8.6L9.6 4.2" stroke="#fff" stroke-width="1" fill="none"/></svg>
<div class="t tr" style="left:57px;top:291.0px">Tools</div>
<svg class="ic" style="left:22px;top:310px" width="9" height="9" viewBox="0 0 9 9"><rect x=".5" y=".5" width="8" height="8" fill="#f4f4f4" stroke="#8a8a8a"/><path d="M2 4.5H7" stroke="#2a4aa8" stroke-width="1"/></svg>
<svg class="ic" style="left:39px;top:307px" width="13" height="13" viewBox="0 0 13 13"><circle cx="6.5" cy="6.5" r="6" fill="#eaeaea" stroke="#d2d2d2"/><path d="M5 3.5L8.5 6.5L5 9.5Z" fill="#707070"/></svg>
<div class="t tr" style="left:57px;top:307.0px">Object Visibility</div>
<svg class="ic" style="left:58px;top:323px" width="13" height="13" viewBox="0 0 13 13"><rect x=".5" y=".5" width="12" height="12" rx="2.5" fill="#0862c8" stroke="#0654ac"/><path d="M3.3 6.6L5.4 8.6L9.6 4.2" stroke="#fff" stroke-width="1" fill="none"/></svg>
<div class="t tr" style="left:76px;top:323.0px">Sets</div>
<svg class="ic" style="left:41px;top:342px" width="9" height="9" viewBox="0 0 9 9"><rect x=".5" y=".5" width="8" height="8" fill="#f4f4f4" stroke="#8a8a8a"/><path d="M2 4.5H7" stroke="#2a4aa8" stroke-width="1"/><path d="M4.5 2V7" stroke="#2a4aa8" stroke-width="1"/></svg>
<svg class="ic" style="left:58px;top:339px" width="13" height="13" viewBox="0 0 13 13"><rect x=".5" y=".5" width="12" height="12" rx="2.5" fill="#f3f3f3" stroke="#3c3c3c"/></svg>
<div class="t tr" style="left:76px;top:339.0px">Stereonet Overlay</div>
<svg class="ic" style="left:58px;top:355px" width="13" height="13" viewBox="0 0 13 13"><rect x=".5" y=".5" width="12" height="12" rx="2.5" fill="#f3f3f3" stroke="#3c3c3c"/></svg>
<div class="t tr" style="left:76px;top:355.0px">Global Mean</div>
<svg class="ic" style="left:58px;top:371px" width="13" height="13" viewBox="0 0 13 13"><rect x=".5" y=".5" width="12" height="12" rx="2.5" fill="#f3f3f3" stroke="#3c3c3c"/></svg>
<div class="t tr" style="left:76px;top:371.0px">Global Best Fit</div>
<svg class="ic" style="left:58px;top:387px" width="13" height="13" viewBox="0 0 13 13"><rect x=".5" y=".5" width="12" height="12" rx="2.5" fill="#f3f3f3" stroke="#3c3c3c"/></svg>
<div class="t tr" style="left:76px;top:387.0px">Traverses</div>
<div class="a" style="left:13px;top:440px;width:214px;height:13px;background:#cde8f9;border:1px solid #62b2e4"></div>
<svg class="ic" style="left:18px;top:442px" width="12" height="9" viewBox="0 0 12 9"><path d="M1 2.3H10L5.5 7Z" fill="#62b3e2"/></svg>
<div class="t" style="left:32px;top:440px;width:200px;text-align:center;font-weight:bold;font-size:11.5px;color:#1e1e1e">Display Settings</div>
<svg class="ic" style="left:18px;top:461px" width="18" height="17" viewBox="0 0 18 17"><defs><linearGradient id="ckG" x1="0" y1="1" x2="1" y2="0"><stop offset="0" stop-color="#3f7f9a"/><stop offset="1" stop-color="#7a9ac8"/></linearGradient></defs><path d="M2 9L6 13L15 2" stroke="url(#ckG)" stroke-width="2.3" fill="none"/></svg>
<svg class="ic" style="left:53px;top:461px" width="10" height="17" viewBox="0 0 10 17"><path d="M3 1.5H7L6 11H4Z" fill="#5aa8c6"/><ellipse cx="5" cy="13.5" rx="2" ry="1.3" fill="#3d8eac"/></svg>
<svg class="ic" style="left:80px;top:459px" width="22" height="20" viewBox="0 0 22 20"><path d="M11 5.5V2.5H3V17.5H11V14.5" stroke="#000" stroke-width="1.6" fill="none"/><path d="M8 10H15" stroke="#000" stroke-width="2.4"/><path d="M14 6L19 10L14 14Z" fill="#000"/></svg>
<svg class="ic" style="left:113px;top:459px" width="22" height="20" viewBox="0 0 22 20"><path d="M11 5.5V2.5H3V17.5H11V14.5" stroke="#000" stroke-width="1.6" fill="none"/><path d="M10 10H17" stroke="#000" stroke-width="2.4"/><path d="M11 6L6 10L11 14Z" fill="#000"/></svg>
<div class="a" style="left:13px;top:486px;width:214px;height:546px;background:#fff;border:2px solid #6c6c6c;border-right:1px solid #dcdcdc;border-bottom:1px solid #dcdcdc"></div>
<div class="a" style="left:15px;top:488px;width:14px;height:511px;background:#f0f0f0"></div>
<div class="a" style="left:15px;top:488px;width:211px;height:17px;background:#f0f0f0"></div>
<svg class="ic" style="left:17px;top:492px" width="9" height="9" viewBox="0 0 9 9"><rect x=".5" y=".5" width="8" height="8" fill="#fff" stroke="#000"/><path d="M2 4.5H7" stroke="#000" stroke-width="1.2"/></svg>
<div class="t" style="left:33px;top:489.5px;font-weight:bold;font-size:11.5px;letter-spacing:0.2px">Stereonet Options</div>
<div class="a" style="left:29px;top:505px;width:197px;height:17px;border-bottom:1px solid #f0f0f0"></div>
<div class="a" style="left:130px;top:505px;width:1px;height:17px;background:#f0f0f0"></div>
<div class="t pg" style="left:32px;top:506.5px">Projection</div>
<div class="t pg" style="left:135px;top:506.5px">Equal Angle</div>
<div class="a" style="left:29px;top:522px;width:197px;height:17px;border-bottom:1px solid #f0f0f0"></div>
<div class="a" style="left:130px;top:522px;width:1px;height:17px;background:#f0f0f0"></div>
<div class="t pg" style="left:32px;top:523.5px">Hemisphere</div>
<div class="t pg" style="left:135px;top:523.5px">Lower</div>
<div class="a" style="left:29px;top:539px;width:197px;height:17px;border-bottom:1px solid #f0f0f0"></div>
<div class="a" style="left:130px;top:539px;width:1px;height:17px;background:#f0f0f0"></div>
<div class="t pg" style="left:32px;top:540.5px">Labels</div>
<div class="t pg" style="left:135px;top:540.5px">NSEW</div>
<div class="a" style="left:29px;top:556px;width:197px;height:17px;border-bottom:1px solid #f0f0f0"></div>
<div class="a" style="left:130px;top:556px;width:1px;height:17px;background:#f0f0f0"></div>
<div class="t pg" style="left:32px;top:557.5px">Exterior Ticks</div>
<svg class="ic" style="left:136px;top:557px" width="13" height="13" viewBox="0 0 13 13"><rect x=".5" y=".5" width="12" height="12" rx="2.5" fill="#0862c8" stroke="#0654ac"/><path d="M3.3 6.6L5.4 8.6L9.6 4.2" stroke="#fff" stroke-width="1" fill="none"/></svg>
<div class="t pg" style="left:153px;top:557.5px">Show</div>
<div class="a" style="left:29px;top:573px;width:197px;height:17px;border-bottom:1px solid #f0f0f0"></div>
<div class="a" style="left:130px;top:573px;width:1px;height:17px;background:#f0f0f0"></div>
<div class="t pg" style="left:32px;top:574.5px">Perimeter Circle</div>
<svg class="ic" style="left:136px;top:574px" width="13" height="13" viewBox="0 0 13 13"><rect x=".5" y=".5" width="12" height="12" rx="2.5" fill="#0862c8" stroke="#0654ac"/><path d="M3.3 6.6L5.4 8.6L9.6 4.2" stroke="#fff" stroke-width="1" fill="none"/></svg>
<div class="t pg" style="left:153px;top:574.5px">Show</div>
<div class="a" style="left:29px;top:590px;width:197px;height:17px;border-bottom:1px solid #f0f0f0"></div>
<div class="a" style="left:130px;top:590px;width:1px;height:17px;background:#f0f0f0"></div>
<div class="t pg" style="left:32px;top:591.5px">Center Cross</div>
<svg class="ic" style="left:136px;top:591px" width="13" height="13" viewBox="0 0 13 13"><rect x=".5" y=".5" width="12" height="12" rx="2.5" fill="#0862c8" stroke="#0654ac"/><path d="M3.3 6.6L5.4 8.6L9.6 4.2" stroke="#fff" stroke-width="1" fill="none"/></svg>
<div class="t pg" style="left:153px;top:591.5px">Show</div>
<div class="a" style="left:29px;top:607px;width:197px;height:17px;border-bottom:1px solid #f0f0f0"></div>
<div class="a" style="left:130px;top:607px;width:1px;height:17px;background:#f0f0f0"></div>
<div class="t pg" style="left:32px;top:608.5px">Cross Hairs</div>
<svg class="ic" style="left:136px;top:608px" width="13" height="13" viewBox="0 0 13 13"><rect x=".5" y=".5" width="12" height="12" rx="2.5" fill="#f3f3f3" stroke="#3c3c3c"/></svg>
<div class="t pg" style="left:153px;top:608.5px">Hidden</div>
<div class="a" style="left:29px;top:624px;width:197px;height:17px;border-bottom:1px solid #f0f0f0"></div>
<div class="a" style="left:130px;top:624px;width:1px;height:17px;background:#f0f0f0"></div>
<div class="t pg" style="left:32px;top:625.5px">Tick Spacing</div>
<div class="t pg" style="left:135px;top:625.5px">10°</div>
<div class="a" style="left:29px;top:641px;width:197px;height:17px;border-bottom:1px solid #f0f0f0"></div>
<div class="a" style="left:130px;top:641px;width:1px;height:17px;background:#f0f0f0"></div>
<div class="t pg" style="left:32px;top:642.5px">Outer Grid Width</div>
<div class="t pg" style="left:135px;top:642.5px">3</div>
<div class="a" style="left:29px;top:658px;width:197px;height:17px;border-bottom:1px solid #f0f0f0"></div>
<div class="a" style="left:130px;top:658px;width:1px;height:17px;background:#f0f0f0"></div>
<div class="t pg" style="left:32px;top:659.5px">Inner Grid Width</div>
<div class="t pg" style="left:135px;top:659.5px">1</div>
<div class="a" style="left:29px;top:675px;width:197px;height:17px;border-bottom:1px solid #f0f0f0"></div>
<div class="a" style="left:130px;top:675px;width:1px;height:17px;background:#f0f0f0"></div>
<div class="t pg" style="left:32px;top:676.5px">Overlay Width</div>
<div class="t pg" style="left:135px;top:676.5px">1</div>
<div class="a" style="left:29px;top:692px;width:197px;height:17px;border-bottom:1px solid #f0f0f0"></div>
<div class="a" style="left:130px;top:692px;width:1px;height:17px;background:#f0f0f0"></div>
<div class="t pg" style="left:32px;top:693.5px">Legend Scale</div>
<div class="t pg" style="left:135px;top:693.5px">100%</div>
<div class="a" style="left:29px;top:709px;width:197px;height:17px;border-bottom:1px solid #f0f0f0"></div>
<div class="a" style="left:130px;top:709px;width:1px;height:17px;background:#f0f0f0"></div>
<div class="t pg" style="left:32px;top:710.5px">Legend Location</div>
<div class="t pg" style="left:135px;top:710.5px">Right</div>
<div class="a" style="left:29px;top:726px;width:197px;height:17px;border-bottom:1px solid #f0f0f0"></div>
<div class="a" style="left:130px;top:726px;width:1px;height:17px;background:#f0f0f0"></div>
<div class="t pg" style="left:32px;top:727.5px">Filter Label</div>
<svg class="ic" style="left:136px;top:727px" width="13" height="13" viewBox="0 0 13 13"><rect x=".5" y=".5" width="12" height="12" rx="2.5" fill="#0862c8" stroke="#0654ac"/><path d="M3.3 6.6L5.4 8.6L9.6 4.2" stroke="#fff" stroke-width="1" fill="none"/></svg>
<div class="t pg" style="left:153px;top:727.5px">Show</div>
<div class="a" style="left:15px;top:743px;width:211px;height:17px;background:#f0f0f0"></div>
<svg class="ic" style="left:17px;top:747px" width="9" height="9" viewBox="0 0 9 9"><rect x=".5" y=".5" width="8" height="8" fill="#fff" stroke="#000"/><path d="M2 4.5H7" stroke="#000" stroke-width="1.2"/></svg>
<div class="t" style="left:33px;top:744.5px;font-weight:bold;font-size:11.5px;letter-spacing:0.2px">Stereonet Fonts</div>
<div class="a" style="left:29px;top:760px;width:197px;height:17px;border-bottom:1px solid #f0f0f0"></div>
<div class="a" style="left:130px;top:760px;width:1px;height:17px;background:#f0f0f0"></div>
<div class="t pg" style="left:32px;top:761.5px">Legend Font</div>
<div class="t pg" style="left:135px;top:761.5px">Arial</div>
<div class="a" style="left:29px;top:777px;width:197px;height:17px;border-bottom:1px solid #f0f0f0"></div>
<div class="a" style="left:130px;top:777px;width:1px;height:17px;background:#f0f0f0"></div>
<div class="t pg" style="left:32px;top:778.5px">Legend Text Size</div>
<div class="t pg" style="left:135px;top:778.5px">Normal</div>
<div class="a" style="left:29px;top:794px;width:197px;height:17px;border-bottom:1px solid #f0f0f0"></div>
<div class="a" style="left:130px;top:794px;width:1px;height:17px;background:#f0f0f0"></div>
<div class="t pg" style="left:32px;top:795.5px">Label Text Size</div>
<div class="t pg" style="left:135px;top:795.5px">Normal</div>
<div class="a" style="left:15px;top:811px;width:211px;height:17px;background:#f0f0f0"></div>
<svg class="ic" style="left:17px;top:815px" width="9" height="9" viewBox="0 0 9 9"><rect x=".5" y=".5" width="8" height="8" fill="#fff" stroke="#000"/><path d="M2 4.5H7" stroke="#000" stroke-width="1.2"/></svg>
<div class="t" style="left:33px;top:812.5px;font-weight:bold;font-size:11.5px;letter-spacing:0.2px">Stereonet Colors</div>
<div class="a" style="left:29px;top:828px;width:197px;height:17px;border-bottom:1px solid #f0f0f0"></div>
<div class="a" style="left:130px;top:828px;width:1px;height:17px;background:#f0f0f0"></div>
<div class="t pg" style="left:32px;top:829.5px">Stereonet</div>
<div class="a" style="left:134px;top:831px;width:17px;height:12px;background:#ffffff;border:1px solid #1a1a1a"></div>
<div class="a" style="left:29px;top:845px;width:197px;height:17px;border-bottom:1px solid #f0f0f0"></div>
<div class="a" style="left:130px;top:845px;width:1px;height:17px;background:#f0f0f0"></div>
<div class="t pg" style="left:32px;top:846.5px">Background</div>
<div class="a" style="left:134px;top:848px;width:17px;height:12px;background:#ffffff;border:1px solid #1a1a1a"></div>
<div class="a" style="left:29px;top:862px;width:197px;height:17px;border-bottom:1px solid #f0f0f0"></div>
<div class="a" style="left:130px;top:862px;width:1px;height:17px;background:#f0f0f0"></div>
<div class="t pg" style="left:32px;top:863.5px">Grid Outer</div>
<div class="a" style="left:134px;top:865px;width:17px;height:12px;background:#000000;border:1px solid #1a1a1a"></div>
<div class="a" style="left:29px;top:879px;width:197px;height:17px;border-bottom:1px solid #f0f0f0"></div>
<div class="a" style="left:130px;top:879px;width:1px;height:17px;background:#f0f0f0"></div>
<div class="t pg" style="left:32px;top:880.5px">Grid Inner</div>
<div class="a" style="left:134px;top:882px;width:17px;height:12px;background:#000000;border:1px solid #1a1a1a"></div>
<div class="a" style="left:29px;top:896px;width:197px;height:17px;border-bottom:1px solid #f0f0f0"></div>
<div class="a" style="left:130px;top:896px;width:1px;height:17px;background:#f0f0f0"></div>
<div class="t pg" style="left:32px;top:897.5px">Label Text</div>
<div class="a" style="left:134px;top:899px;width:17px;height:12px;background:#000000;border:1px solid #1a1a1a"></div>
<div class="a" style="left:29px;top:913px;width:197px;height:17px;border-bottom:1px solid #f0f0f0"></div>
<div class="a" style="left:130px;top:913px;width:1px;height:17px;background:#f0f0f0"></div>
<div class="t pg" style="left:32px;top:914.5px">Legend Text</div>
<div class="a" style="left:134px;top:916px;width:17px;height:12px;background:#000000;border:1px solid #1a1a1a"></div>
<div class="a" style="left:29px;top:930px;width:197px;height:17px;border-bottom:1px solid #f0f0f0"></div>
<div class="a" style="left:130px;top:930px;width:1px;height:17px;background:#f0f0f0"></div>
<div class="t pg" style="left:32px;top:931.5px">Overlay</div>
<div class="a" style="left:134px;top:933px;width:17px;height:12px;background:#c0c0c0;border:1px solid #1a1a1a"></div>
<div class="a" style="left:29px;top:947px;width:197px;height:17px;border-bottom:1px solid #f0f0f0"></div>
<div class="a" style="left:130px;top:947px;width:1px;height:17px;background:#f0f0f0"></div>
<div class="t pg" style="left:32px;top:948.5px">Global Mean</div>
<div class="a" style="left:134px;top:950px;width:17px;height:12px;background:#004a00;border:1px solid #1a1a1a"></div>
<div class="a" style="left:29px;top:964px;width:197px;height:17px;border-bottom:1px solid #f0f0f0"></div>
<div class="a" style="left:130px;top:964px;width:1px;height:17px;background:#f0f0f0"></div>
<div class="t pg" style="left:32px;top:965.5px">Global Best Fit</div>
<div class="a" style="left:134px;top:967px;width:17px;height:12px;background:#000080;border:1px solid #1a1a1a"></div>
<div class="a" style="left:15px;top:981px;width:211px;height:17px;background:#f0f0f0"></div>
<svg class="ic" style="left:17px;top:985px" width="9" height="9" viewBox="0 0 9 9"><rect x=".5" y=".5" width="8" height="8" fill="#fff" stroke="#000"/><path d="M2 4.5H7" stroke="#000" stroke-width="1.2"/><path d="M4.5 2V7" stroke="#000" stroke-width="1.2"/></svg>
<div class="t" style="left:33px;top:982.5px;font-weight:bold;font-size:11.5px;letter-spacing:0.2px">Default Tool Colors</div>
<svg class="ic" style="left:234px;top:503px" width="6" height="8" viewBox="0 0 6 8"><path d="M5 0.5V7.5L1 4Z" fill="#222"/></svg>
<svg class="ic" style="left:234px;top:559px" width="6" height="8" viewBox="0 0 6 8"><path d="M5 0.5V7.5L1 4Z" fill="#222"/></svg>
<svg class="ic" style="left:234px;top:616px" width="6" height="8" viewBox="0 0 6 8"><path d="M5 0.5V7.5L1 4Z" fill="#222"/></svg>
<div class="a" style="left:0;top:1038px;width:241px;height:1px;background:#a6a6a6"></div>
<div class="a" style="left:233px;top:500px;width:8px;height:1px;background:#8a8a8a"></div>
<div class="a" style="left:233px;top:625px;width:8px;height:1px;background:#8a8a8a"></div>
<svg class="ic" style="left:236px;top:510px" width="4" height="114" viewBox="0 0 4 114"><path d="M2.5 2V50M2.5 58V106" stroke="#555" stroke-width="1" stroke-dasharray="1 2"/></svg>
<div class="a" style="left:243px;top:990px;width:1685px;height:6px;background:#f6f6f6;border-bottom:1px solid #e2e2e2"></div>
<div class="a" style="left:242px;top:997px;width:165px;height:20px;background:#ececec;border-bottom:1px solid #d8d8d8"></div>
<div class="a" style="left:406px;top:997px;width:1px;height:22px;background:#dadada"></div>
<div class="a" style="left:650px;top:997px;width:1px;height:22px;background:#dadada"></div>
<svg class="ic" style="left:245px;top:1000px" width="18" height="16" viewBox="0 0 18 16"><rect x="1.5" y="1.5" width="15" height="12.5" fill="#fff" stroke="#555" stroke-width="1.2"/><rect x="1" y="1" width="16" height="2.5" fill="#6cb8f0"/><path d="M2 7H16M2 10.5H16M6.5 4V14M11.5 4V14" stroke="#555" stroke-width="1"/></svg>
<div class="t" style="left:268px;top:999.5px;font-size:11px;letter-spacing:-0.17px">Tutorial 01 Quick Start:1*</div>
<svg class="ic" style="left:411px;top:1000px" width="15" height="15"><use href="#logo"/></svg>
<div class="t" style="left:433px;top:999.5px;font-size:11px;letter-spacing:-0.17px">Tutorial 01 Quick Start:2* - Stereonet Plot</div>
<div class="a" style="left:241px;top:1019px;width:1687px;height:1px;background:#9c9c9c"></div>
<div class="t" style="left:243px;top:1024.5px;font-weight:bold;font-size:11.5px">Undo Changed to Vector Plot Preset</div>
<div class="t" style="left:1658px;top:1024.5px;font-weight:bold;font-size:11.5px">MAX DATATIPS</div>
<div class="a" style="left:1760px;top:1023px;width:1px;height:16px;background:#d0d0d0"></div>
<div class="t" style="left:1765px;top:1024.5px;font-weight:bold;font-size:11.5px">Trend / Plunge</div>
<div class="a" style="left:1872px;top:1023px;width:1px;height:16px;background:#d0d0d0"></div>
<div class="a" style="left:1250px;top:160px;width:378px;height:45px;border:2px solid #000;background:#fff"></div>
<div class="a" style="left:1252px;top:182px;width:374px;height:1px;background:#000"></div>
<div class="t lg" style="left:1269px;top:164px;font-weight:bold">Symbol</div>
<div class="t lg" style="left:1330px;top:164px;font-weight:bold">Feature</div>
<svg class="ic" style="left:1285px;top:189px" width="8" height="8" viewBox="0 0 8 8"><path d="M4 .8L7.2 4L4 7.2L.8 4Z" fill="none" stroke="#000" stroke-width="1"/></svg>
<div class="t lg" style="left:1330px;top:186px;font-size:11px">Pole Vectors</div>
<div class="a" style="left:1250px;top:211px;width:378px;height:88px;border:2px solid #000;background:#fff"></div>
<div class="a" style="left:1252px;top:233px;width:374px;height:1px;background:#000"></div>
<div class="a" style="left:1252px;top:255px;width:374px;height:1px;background:#000"></div>
<div class="a" style="left:1252px;top:276px;width:374px;height:1px;background:#000"></div>
<div class="a" style="left:1458px;top:213px;width:1px;height:84px;background:#000"></div>
<div class="t lg" style="left:1250px;width:199px;text-align:right;top:214.3px;font-weight:bold">Plot Mode</div>
<div class="t lg" style="left:1466px;top:214.3px;font-size:11px">Pole Vectors</div>
<div class="t lg" style="left:1250px;width:199px;text-align:right;top:236.2px;font-weight:bold">Vector Count</div>
<div class="t lg" style="left:1466px;top:236.2px;font-size:11px">61 (40 Entries)</div>
<div class="t lg" style="left:1250px;width:199px;text-align:right;top:258.1px;font-weight:bold">Hemisphere</div>
<div class="t lg" style="left:1466px;top:258.1px;font-size:11px">Lower</div>
<div class="t lg" style="left:1250px;width:199px;text-align:right;top:280.0px;font-weight:bold">Projection</div>
<div class="t lg" style="left:1466px;top:280.0px;font-size:11px">Equal Angle</div>
<svg class="a" style="left:0;top:0" width="1936" height="1048" viewBox="0 0 1936 1048">
<circle cx="804.6" cy="518.4" r="357.8" fill="none" stroke="#000" stroke-width="2.3"/>
<path d="M804.60 160.60L804.60 150.10M866.73 166.04L868.55 155.70M926.97 182.18L930.57 172.31M983.50 208.54L988.75 199.44M1034.59 244.31L1041.34 236.27M1078.69 288.41L1086.73 281.66M1114.46 339.50L1123.56 334.25M1140.82 396.03L1150.69 392.43M1156.96 456.27L1167.30 454.45M1162.40 518.40L1172.90 518.40M1156.96 580.53L1167.30 582.35M1140.82 640.77L1150.69 644.37M1114.46 697.30L1123.56 702.55M1078.69 748.39L1086.73 755.14M1034.59 792.49L1041.34 800.53M983.50 828.26L988.75 837.36M926.97 854.62L930.57 864.49M866.73 870.76L868.55 881.10M804.60 876.20L804.60 886.70M742.47 870.76L740.65 881.10M682.23 854.62L678.63 864.49M625.70 828.26L620.45 837.36M574.61 792.49L567.86 800.53M530.51 748.39L522.47 755.14M494.74 697.30L485.64 702.55M468.38 640.77L458.51 644.37M452.24 580.53L441.90 582.35M446.80 518.40L436.30 518.40M452.24 456.27L441.90 454.45M468.38 396.03L458.51 392.43M494.74 339.50L485.64 334.25M530.51 288.41L522.47 281.66M574.61 244.31L567.86 236.27M625.70 208.54L620.45 199.44M682.23 182.18L678.63 172.31M742.47 166.04L740.65 155.70" stroke="#000" stroke-width="2.2" fill="none"/>
<path d="M793.5 518.5H815.8M804.5 507.5V529.6" stroke="#000" stroke-width="1.3"/>
<path d="M734.8 201.0L737.8 204.0L734.8 207.0L731.8 204.0ZM650.5 219.6L653.5 222.6L650.5 225.6L647.5 222.6ZM630.2 231.1L633.2 234.1L630.2 237.1L627.2 234.1ZM655.8 229.9L658.8 232.9L655.8 235.9L652.8 232.9ZM670.6 246.9L673.6 249.9L670.6 252.9L667.6 249.9ZM579.1 269.6L582.1 272.6L579.1 275.6L576.1 272.6ZM607.4 267.8L610.4 270.8L607.4 273.8L604.4 270.8ZM631.5 263.8L634.5 266.8L631.5 269.8L628.5 266.8ZM578.7 285.9L581.7 288.9L578.7 291.9L575.7 288.9ZM582.7 297.6L585.7 300.6L582.7 303.6L579.7 300.6ZM571.1 301.6L574.1 304.6L571.1 307.6L568.1 304.6ZM571.6 309.4L574.6 312.4L571.6 315.4L568.6 312.4ZM963.3 465.1L966.3 468.1L963.3 471.1L960.3 468.1ZM965.1 471.1L968.1 474.1L965.1 477.1L962.1 474.1ZM954.3 474.0L957.3 477.0L954.3 480.0L951.3 477.0ZM953.3 485.4L956.3 488.4L953.3 491.4L950.3 488.4ZM927.5 512.3L930.5 515.3L927.5 518.3L924.5 515.3ZM975.0 511.1L978.0 514.1L975.0 517.1L972.0 514.1ZM975.0 514.4L978.0 517.4L975.0 520.4L972.0 517.4ZM921.2 554.4L924.2 557.4L921.2 560.4L918.2 557.4ZM577.2 595.9L580.2 598.9L577.2 601.9L574.2 598.9ZM629.4 681.6L632.4 684.6L629.4 687.6L626.4 684.6ZM635.4 687.4L638.4 690.4L635.4 693.4L632.4 690.4ZM635.4 687.4L638.4 690.4L635.4 693.4L632.4 690.4ZM628.9 694.1L631.9 697.1L628.9 700.1L625.9 697.1ZM659.5 691.4L662.5 694.4L659.5 697.4L656.5 694.4ZM689.0 696.7L692.0 699.7L689.0 702.7L686.0 699.7ZM689.0 696.7L692.0 699.7L689.0 702.7L686.0 699.7ZM612.2 711.3L615.2 714.3L612.2 717.3L609.2 714.3ZM641.9 705.9L644.9 708.9L641.9 711.9L638.9 708.9ZM672.9 707.0L675.9 710.0L672.9 713.0L669.9 710.0ZM682.0 707.7L685.0 710.7L682.0 713.7L679.0 710.7ZM649.8 724.4L652.8 727.4L649.8 730.4L646.8 727.4ZM711.6 719.0L714.6 722.0L711.6 725.0L708.6 722.0ZM723.8 742.9L726.8 745.9L723.8 748.9L720.8 745.9ZM622.0 780.7L625.0 783.7L622.0 786.7L619.0 783.7ZM963.9 738.8L966.9 741.8L963.9 744.8L960.9 741.8ZM1038.4 753.4L1041.4 756.4L1038.4 759.4L1035.4 756.4ZM981.8 805.0L984.8 808.0L981.8 811.0L978.8 808.0Z" stroke="#000" stroke-width="1" fill="none"/>
</svg>
<div class="t lbl" style="left:796.2px;top:131px">N</div>
<div class="t lbl" style="left:797.6px;top:890px">S</div>
<div class="t lbl" style="left:414.9px;top:509px">W</div>
<div class="t lbl" style="left:1176.3px;top:509px">E</div>
</body></html>
